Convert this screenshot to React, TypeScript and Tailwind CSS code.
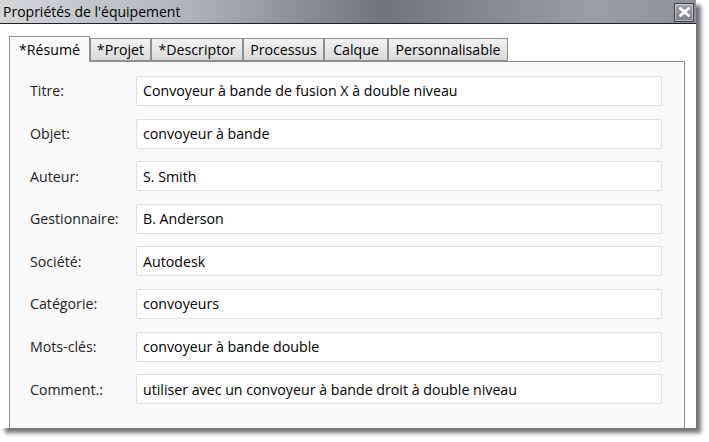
import React from "react";

const tabs = [
  { label: "*Résumé", active: true, w: "w-[81px]" },
  { label: "*Projet", w: "w-[61px]" },
  { label: "*Descriptor", w: "w-[92px]" },
  { label: "Processus", w: "w-[81px]" },
  { label: "Calque", w: "w-[64px]" },
  { label: "Personnalisable", w: "w-[120px]" },
];

const fields = [
  ["Titre:", "Convoyeur à bande de fusion X à double niveau"],
  ["Objet:", "convoyeur à bande"],
  ["Auteur:", "S. Smith"],
  ["Gestionnaire:", "B. Anderson"],
  ["Société:", "Autodesk"],
  ["Catégorie:", "convoyeurs"],
  ["Mots-clés:", "convoyeur à bande double"],
  ["Comment.:", "utiliser avec un convoyeur à bande droit à double niveau"],
];

export default function App() {
  return (
    <div className="w-[709px] h-[442px] bg-white font-['Open_Sans',sans-serif] text-[14.2px] text-[#1a1a1a] overflow-hidden">
      <div className="w-[696px] h-[428px] flex flex-col bg-white shadow-[5px_5px_4px_rgba(0,0,0,0.55)]">
        {/* title bar */}
        <div className="h-[24px] flex items-center justify-between border-b border-[#202020] bg-[linear-gradient(to_right,#d4d6d8_0%,#b4b8bc_25%,#70757a_55%,#9a9ea2_85%,#8e9296_100%)] pl-[3px] pr-[2px]">
          <span className="text-[14px] text-black leading-none">Propriétés de l'équipement</span>
          <button className="w-[20px] h-[19px] mt-[1px] flex items-center justify-center border border-[#3c4046] bg-[linear-gradient(#a4a8ac,#7c8086)] shadow-[inset_0_0_0_1px_rgba(255,255,255,0.45)]">
            <svg width="11" height="10" viewBox="0 0 11 10">
              <path d="M1.5 1.5 L9.5 8.5 M9.5 1.5 L1.5 8.5" stroke="#ffffff" strokeWidth="2.6" strokeLinecap="square" />
            </svg>
          </button>
        </div>
        {/* body */}
        <div className="flex-1 flex flex-col pt-[11px] pl-[9px] pr-[11px]">
          <div className="flex items-end h-[26px]">
            {tabs.map((t) =>
              t.active ? (
                <div
                  key={t.label}
                  className={`${t.w} h-[26px] -mb-px z-10 flex items-center justify-center border border-b-0 border-[#8d8d8d] bg-[#fafafa] text-black`}
                >
                  {t.label}
                </div>
              ) : (
                <div
                  key={t.label}
                  className={`${t.w} h-[23px] flex items-center justify-center border border-[#8d8d8d] bg-[linear-gradient(#f2f2f2,#e6e6e6_50%,#d9d9d9)] text-black`}
                >
                  {t.label}
                </div>
              )
            )}
          </div>
          <div className="flex-1 border border-b-0 border-[#8d8d8d] bg-[#f9f9f9] pt-[14px] pl-[20px] pr-[22px] flex flex-col gap-[12.6px]">
            {fields.map(([label, value]) => (
              <div key={label} className="flex items-center h-[30px]">
                <span className="w-[106px] text-[#222]">{label}</span>
                <div className="flex-1 h-[30px] flex items-center px-[6px] bg-white border border-[#dcdee2] rounded-[2px] text-black">
                  {value}
                </div>
              </div>
            ))}
          </div>
        </div>
      </div>
    </div>
  );
}
